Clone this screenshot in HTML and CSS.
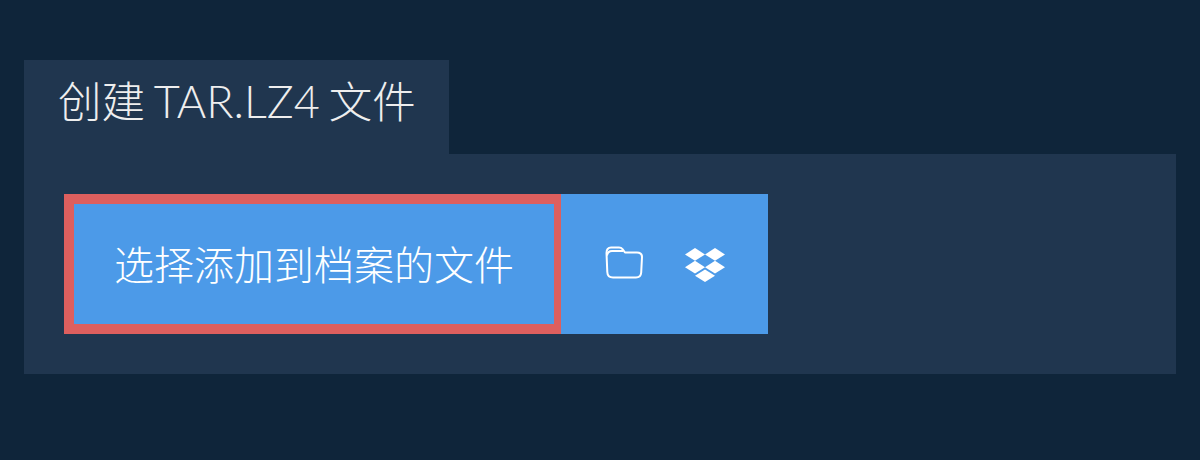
FILE: index.html
```html
<!DOCTYPE html>
<html lang="zh">
<head>
    <meta charset="UTF-8">
    <meta name="viewport" content="width=device-width, initial-scale=1.0">
    <title>创建 TAR.LZ4 文件</title>
    <link rel="stylesheet" href="styles.css">
</head>
<body>

<div class="tab">
    <h1>创建 <span class="format">TAR.LZ4</span> 文件</h1>
</div>

<div class="panel">
    <div class="picker">
        <button class="choose-button">选择添加到档案的文件</button>
        <div class="sources">
            <svg class="folder-icon" viewBox="0 0 38 33" width="38" height="33" fill="none" stroke="#fff" stroke-width="2" stroke-linejoin="round">
                <path d="M1.5 7L2.3 26C2.4 29.5 4.5 31.5 8 31.5H31C34 31.5 36 29.5 36.2 26.5L37 11C37 8 35 6.5 32 6.5H20L17.5 3.2C16.6 2 15.5 1.5 14 1.5H6C3 1.5 1.5 3.5 1.5 7Z"/>
                <path d="M2 9.5C2.5 6.5 4 5 7 5H18"/>
            </svg>
            <svg class="dropbox-icon" viewBox="0 0 40 34" width="40" height="34" fill="#fff">
                <path d="M10 0L20 6.4L10 12.8L0 6.4Z"/>
                <path d="M30 0L40 6.4L30 12.8L20 6.4Z"/>
                <path d="M10 12.8L20 19.2L10 25.6L0 19.2Z"/>
                <path d="M30 12.8L40 19.2L30 25.6L20 19.2Z"/>
                <path d="M20 21.4L30 27.7L20 34L10 27.7Z"/>
            </svg>
        </div>
    </div>
</div>

</body>
</html>
```

FILE: styles.css
```css
body {
    margin: 0;
    padding: 60px 24px 0;
    background-color: #0f253a;
    font-family: Lato, "Noto Sans CJK SC", sans-serif;
    font-weight: 300;
    color: white;
}
.tab {
    box-sizing: border-box;
    width: 425px;
    height: 94px;
    padding: 13px 0 0 34px;
    background: #20364f;
}
.tab h1 {
    margin: 0;
    font-size: 43.5px;
    line-height: 56px;
    font-weight: 300;
    color: #eeeeee;
    white-space: nowrap;
    word-spacing: -3px;
}
.format {
    font-size: 45px;
}
.panel {
    padding: 40px;
    background: #20364f;
}
.picker {
    display: flex;
    height: 140px;
}
.choose-button {
    box-sizing: border-box;
    width: 497px;
    height: 140px;
    padding: 0 0 2px;
    background: #4c9ae8;
    border: 10px solid #dd5f5e;
    border-right-width: 7px;
    color: white;
    font-family: inherit;
    font-size: 40px;
    font-weight: 300;
}
.sources {
    display: flex;
    align-items: center;
    gap: 42px;
    width: 207px;
    padding-left: 44px;
    box-sizing: border-box;
    background: #4c9ae8;
}
.folder-icon {
    margin-bottom: 3px;
}
.dropbox-icon {
    margin-top: 2px;
}
```
